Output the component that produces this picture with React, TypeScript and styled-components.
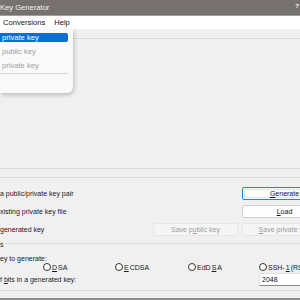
import React from "react";
import styled, { createGlobalStyle } from "styled-components";

const GlobalStyle = createGlobalStyle`
  html, body {
    margin: 0;
    padding: 0;
    width: 300px;
    height: 300px;
    overflow: hidden;
    background: #f0f0f0;
  }
  body {
    font-family: "Liberation Sans", Arial, sans-serif;
  }
`;

function App() {
  return (
    <>
      <GlobalStyle />
      <Window>
        <TitleBar>
          <span>Key Generator</span>
          <HelpGlyph>?</HelpGlyph>
        </TitleBar>
        <MenuBar>
          <MenuItem>Conversions</MenuItem>
          <MenuItem>Help</MenuItem>
        </MenuBar>
        <Body>
          <KeyGroup />
          <ActionsGroup>
            <ActionLabel>a public/private key pair</ActionLabel>
            <Spacer />
            <Button $focused>
              <u>G</u>enerate
            </Button>
            <ActionLabel>xisting private key file</ActionLabel>
            <Spacer />
            <Button>
              <u>L</u>oad
            </Button>
            <ActionLabel>generated key</ActionLabel>
            <Button disabled>
              Save p<u>u</u>blic key
            </Button>
            <Button disabled>
              <u>S</u>ave private key
            </Button>
          </ActionsGroup>
          <ParamsGroup>
            <GroupTitle>s</GroupTitle>
            <ParamLabel>ey to generate:</ParamLabel>
            <RadioRow>
              <Radio>
                <Circle />
                <u>D</u>SA
              </Radio>
              <Radio>
                <Circle />
                <u>E</u>CDSA
              </Radio>
              <Radio>
                <Circle />
                EdD<u>S</u>A
              </Radio>
              <Radio>
                <Circle />
                SSH-<u>1</u> (RSA)
              </Radio>
            </RadioRow>
            <BitsRow>
              <ParamLabel>
                f <u>b</u>its in a generated key:
              </ParamLabel>
              <BitsInput defaultValue="2048" />
            </BitsRow>
          </ParamsGroup>
        </Body>
        <BottomEdge />
        <Dropdown>
          <DropItem $active>private key</DropItem>
          <DropItem>public key</DropItem>
          <DropItem>private key</DropItem>
          <DropSeparator />
        </Dropdown>
      </Window>
    </>
  );
}

const Window = styled.div`
  position: relative;
  width: 300px;
  height: 300px;
  display: flex;
  flex-direction: column;
  overflow: hidden;
  font-size: 7px;
  color: #000;
`;

const TitleBar = styled.div`
  height: 15px;
  border-bottom: 1px solid #a29e9d;
  background: #77716f;
  color: #f4f4f4;
  font-size: 7.6px;
  display: flex;
  align-items: center;
  justify-content: space-between;
  box-sizing: content-box;
`;

const HelpGlyph = styled.span`
  margin-right: 1px;
  margin-top: -4px;
  font-size: 6px;
  font-weight: bold;
  color: #fff;
`;

const MenuBar = styled.div`
  height: 13px;
  background: #fff;
  display: flex;
  align-items: center;
  gap: 9px;
  padding-left: 3px;
  font-size: 7.6px;
`;

const MenuItem = styled.span`
  color: #111;
`;

const Body = styled.div`
  flex: 1;
  display: flex;
  flex-direction: column;
  padding-top: 9px;
`;

const KeyGroup = styled.div`
  height: 129px;
  border-top: 1px solid #dadada;
  border-bottom: 1px solid #dadada;
`;

const ActionsGroup = styled.div`
  margin-top: 8px;
  margin-right: -27px;
  border-top: 1px solid #dadada;
  border-bottom: 1px solid #dadada;
  height: 67px;
  box-sizing: border-box;
  display: grid;
  grid-template-columns: 1fr 85px 85px;
  grid-auto-rows: 13px;
  column-gap: 4px;
  row-gap: 5px;
  align-items: center;
  padding-top: 9px;
`;

const ActionLabel = styled.span`
  color: #1a1a1a;
  white-space: nowrap;
`;

const Spacer = styled.span``;

const Button = styled.button<{ $focused?: boolean }>`
  height: 13px;
  padding: 0;
  font-family: inherit;
  font-size: 7px;
  color: #111;
  background: #fdfdfd;
  border: 1px solid ${({ $focused }) => ($focused ? "#2a7fd4" : "#d0d0d0")};
  box-shadow: ${({ $focused }) =>
    $focused ? "inset 0 0 0 1px #fff, inset 0 0 0 2px #d3e6f8" : "none"};
  border-radius: 2px;
  text-align: center;
  white-space: nowrap;

  &:disabled {
    color: #9d9d9d;
    background: #f5f5f5;
    border-color: #e6e6e6;
  }
`;

const ParamsGroup = styled.div`
  position: relative;
  height: 47px;
  box-sizing: border-box;
  border-bottom: 1px solid #dadada;
  display: flex;
  flex-direction: column;
  padding-top: 11px;
`;

const GroupTitle = styled.span`
  position: absolute;
  top: -3px;
  left: 0;
  padding-right: 1px;
  background: #f0f0f0;
  color: #1a1a1a;
  line-height: 7px;
`;

const ParamLabel = styled.span`
  color: #1a1a1a;
  white-space: nowrap;
  line-height: 8px;
`;

const RadioRow = styled.div`
  display: grid;
  grid-template-columns: 72px 73px 71px auto;
  padding-left: 43px;
  height: 8px;
  align-items: center;
  white-space: nowrap;
`;

const Radio = styled.label`
  display: flex;
  align-items: center;
  gap: 1px;
  color: #1a1a1a;
`;

const Circle = styled.span`
  width: 6px;
  height: 6px;
  border: 1px solid #333;
  border-radius: 50%;
  background: #fff;
  flex: none;
`;

const BitsRow = styled.div`
  display: flex;
  align-items: center;
  justify-content: space-between;
  margin-top: 2px;
  height: 13px;
`;

const BitsInput = styled.input`
  width: 50px;
  height: 13px;
  box-sizing: border-box;
  margin-right: -9px;
  padding: 0 2px;
  border: 1px solid #e2e2e2;
  border-bottom-color: #8a8a8a;
  background: #fff;
  font-family: inherit;
  font-size: 7px;
  color: #111;
  outline: none;
`;

const BottomEdge = styled.div`
  height: 2px;
  margin-top: 5px;
  background: #8d8d8d;
`;

const Dropdown = styled.div`
  position: absolute;
  top: 29px;
  left: 0;
  width: 73px;
  height: 64px;
  background: #f9f9f9;
  border-radius: 0 0 6px 0;
  box-shadow: 1px 2px 4px rgba(0, 0, 0, 0.22);
  display: flex;
  flex-direction: column;
  padding-top: 4px;
  box-sizing: border-box;
  font-size: 7.6px;
`;

const DropItem = styled.div<{ $active?: boolean }>`
  width: 68px;
  height: 9px;
  line-height: 9px;
  margin-bottom: 5px;
  padding-left: 2px;
  box-sizing: border-box;
  border-radius: 0 2px 2px 0;
  background: ${({ $active }) => ($active ? "#0a6fd4" : "transparent")};
  color: ${({ $active }) => ($active ? "#fff" : "#9f9f9f")};
`;

const DropSeparator = styled.div`
  width: 68px;
  height: 1px;
  margin-top: -2px;
  background: #d6d6d6;
`;

export default App;
